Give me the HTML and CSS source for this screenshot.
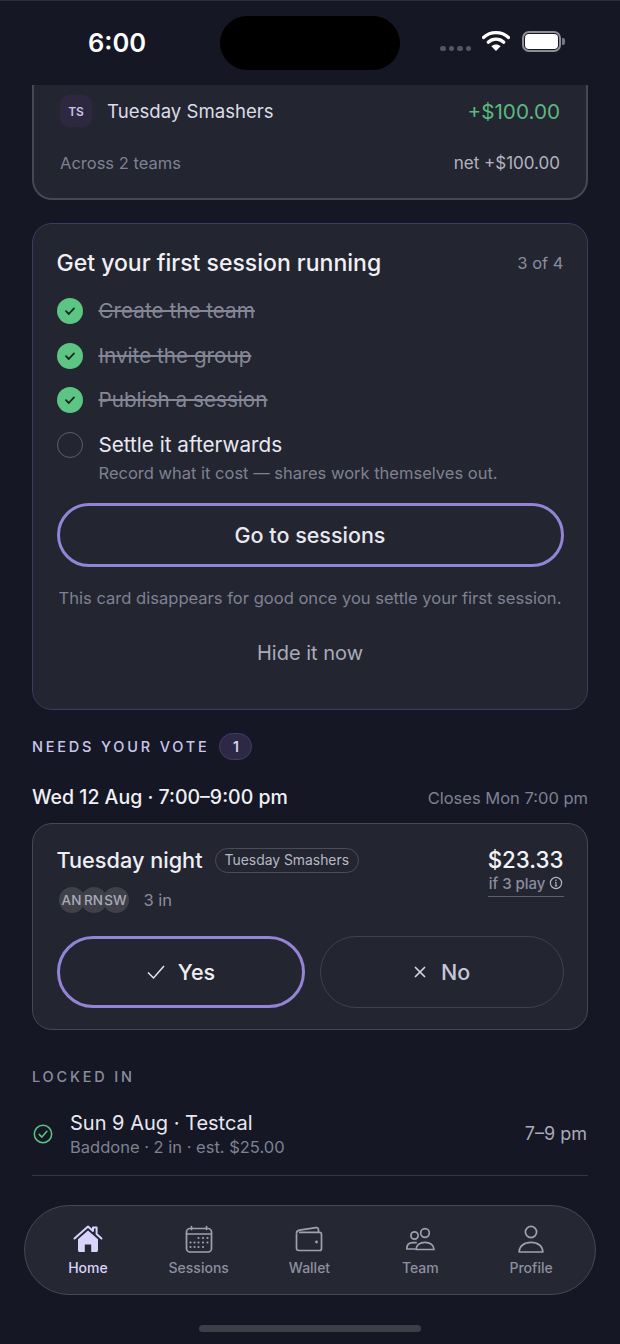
FILE: index.html
```html
<!DOCTYPE html>
<html lang="en">
<head>
  <meta charset="UTF-8">
  <meta name="viewport" content="width=device-width, initial-scale=1.0">
  <title>Home</title>
  <link rel="stylesheet" href="styles.css">
</head>
<body>
<div class="screen">
  <header class="status-bar">
    <span class="clock">6:00</span>
    <div class="island"></div>
    <div class="status-icons">
      <span class="signal"><i></i><i></i><i></i><i></i></span>
      <svg class="wifi" width="28" height="22" viewBox="0 0 28 22">
        <path d="M1.500 7.500C8.500 1 19.500 1 26.500 7.500" fill="none" stroke="#fff" stroke-width="3.200" stroke-linecap="round"/>
        <path d="M6.200 12.200C10.600 8.200 17.400 8.200 21.800 12.200" fill="none" stroke="#fff" stroke-width="3.200" stroke-linecap="round"/>
        <path d="M14 21L9.400 16.200C12 14 16 14 18.600 16.200Z" fill="#fff"/>
      </svg>
      <span class="battery"><span class="battery-fill"></span></span>
      <span class="battery-cap"></span>
    </div>
  </header>

  <section class="card wallet-card">
    <div class="wallet-row">
      <span class="team-badge">TS</span>
      <span class="team-name">Tuesday Smashers</span>
      <span class="amount">+$100.00</span>
    </div>
    <div class="wallet-foot">
      <span>Across 2 teams</span>
      <span class="net">net +$100.00</span>
    </div>
  </section>

  <section class="card setup-card">
    <div class="setup-head">
      <h2>Get your first session running</h2>
      <span class="setup-count">3 of 4</span>
    </div>
    <ul class="steps">
      <li class="step done">
        <svg class="tick" width="26" height="26" viewBox="0 0 26 26"><circle cx="13" cy="13" r="13" fill="#5cc583"/><path d="M9 13.200l2.800 2.800 5.200-5.600" fill="none" stroke="#15261d" stroke-width="1.800" stroke-linecap="round" stroke-linejoin="round"/></svg>
        <span>Create the team</span>
      </li>
      <li class="step done">
        <svg class="tick" width="26" height="26" viewBox="0 0 26 26"><circle cx="13" cy="13" r="13" fill="#5cc583"/><path d="M9 13.200l2.800 2.800 5.200-5.600" fill="none" stroke="#15261d" stroke-width="1.800" stroke-linecap="round" stroke-linejoin="round"/></svg>
        <span>Invite the group</span>
      </li>
      <li class="step done">
        <svg class="tick" width="26" height="26" viewBox="0 0 26 26"><circle cx="13" cy="13" r="13" fill="#5cc583"/><path d="M9 13.200l2.800 2.800 5.200-5.600" fill="none" stroke="#15261d" stroke-width="1.800" stroke-linecap="round" stroke-linejoin="round"/></svg>
        <span>Publish a session</span>
      </li>
      <li class="step todo">
        <span class="empty-dot"></span>
        <div>
          <div class="step-title">Settle it afterwards</div>
          <div class="step-sub">Record what it cost — shares work themselves out.</div>
        </div>
      </li>
    </ul>
    <button class="btn-outline">Go to sessions</button>
    <p class="setup-note">This card disappears for good once you settle your first session.</p>
    <button class="btn-plain">Hide it now</button>
  </section>

  <div class="section-head">
    <span class="eyebrow">NEEDS YOUR VOTE</span>
    <span class="count-pill">1</span>
  </div>

  <div class="vote-date">
    <span class="date">Wed 12 Aug · 7:00–9:00 pm</span>
    <span class="closes">Closes Mon 7:00 pm</span>
  </div>

  <section class="card vote-card">
    <div class="vote-top">
      <div class="vote-info">
        <div class="vote-title">
          <span class="session-name">Tuesday night</span>
          <span class="team-tag">Tuesday Smashers</span>
        </div>
        <div class="attendees">
          <span class="avatars">
            <span class="avatar">AN</span>
            <span class="avatar">RN</span>
            <span class="avatar">SW</span>
          </span>
          <span class="in-count">3 in</span>
        </div>
      </div>
      <div class="price">
        <div class="price-value">$23.33</div>
        <div class="price-note">if 3 play
          <svg width="14" height="14" viewBox="0 0 14 14"><circle cx="7" cy="7" r="5.600" fill="none" stroke="#b4b6c4" stroke-width="1.200"/><path d="M7 6.200v3.600M5.900 9.900h2.200M6 6.200h1" fill="none" stroke="#b4b6c4" stroke-width="1.100"/><circle cx="7" cy="4.200" r=".8" fill="#b4b6c4"/></svg>
        </div>
      </div>
    </div>
    <div class="vote-actions">
      <button class="vote-btn yes">
        <svg width="20" height="16" viewBox="0 0 20 16"><path d="M2 8.500l5.500 5.500L18 2" fill="none" stroke="#e6e6ee" stroke-width="1.500"/></svg>
        Yes
      </button>
      <button class="vote-btn no">
        <svg width="14" height="14" viewBox="0 0 14 14"><path d="M2 2l10 10M12 2L2 12" fill="none" stroke="#d5d6e2" stroke-width="1.700"/></svg>
        No
      </button>
    </div>
  </section>

  <div class="eyebrow locked-head">LOCKED IN</div>

  <div class="locked-row">
    <svg width="20" height="20" viewBox="0 0 20 20"><circle cx="10" cy="10" r="8.700" fill="none" stroke="#5cc583" stroke-width="1.500"/><path d="M6.200 10.400l2.700 2.700 5-5.800" fill="none" stroke="#5cc583" stroke-width="1.500" stroke-linecap="round" stroke-linejoin="round"/></svg>
    <div class="locked-text">
      <div class="locked-title">Sun 9 Aug · Testcal</div>
      <div class="locked-sub">Baddone · 2 in · est. $25.00</div>
    </div>
    <span class="locked-time">7–9 pm</span>
  </div>

  <nav class="tab-bar">
    <a class="tab active">
      <svg width="30" height="30" viewBox="0 0 30 30"><path d="M1.500 14.500L15 2.500l5 4.400V3.500h3.600v6.600l4.900 4.400" fill="none" stroke="#d9d4fb" stroke-width="2" stroke-linecap="round" stroke-linejoin="round"/><path d="M5 15.200L15 6.400l10 8.800v11c0 1-.7 1.800-1.800 1.800h-5v-7.500h-6.400V28h-5C5.700 28 5 27.200 5 26.200z" fill="#d9d4fb"/></svg>
      Home
    </a>
    <a class="tab">
      <svg width="30" height="30" viewBox="0 0 30 30" fill="none" stroke="#9fa1b1" stroke-width="1.700"><rect x="2.500" y="4.500" width="25" height="23.500" rx="3.500"/><path d="M2.500 10h25M7.500 2.500v3M22.500 2.500v3" stroke-linecap="round"/><g fill="#9fa1b1" stroke="none"><circle cx="14.500" cy="14" r="1.100"/><circle cx="19" cy="14" r="1.100"/><circle cx="23.500" cy="14" r="1.100"/><circle cx="6.500" cy="18.500" r="1.100"/><circle cx="10.500" cy="18.500" r="1.100"/><circle cx="14.500" cy="18.500" r="1.100"/><circle cx="19" cy="18.500" r="1.100"/><circle cx="23.500" cy="18.500" r="1.100"/><circle cx="6.500" cy="23" r="1.100"/><circle cx="10.500" cy="23" r="1.100"/><circle cx="14.500" cy="23" r="1.100"/><circle cx="19" cy="23" r="1.100"/></g></svg>
      Sessions
    </a>
    <a class="tab">
      <svg width="30" height="30" viewBox="0 0 30 30" fill="none" stroke="#9fa1b1" stroke-width="1.700" stroke-linejoin="round"><path d="M2.500 9.500c0-2 1.200-3 3-3.300L22 3.700c1.500-.2 2.500.6 2.500 2.300v2"/><path d="M2.500 9.500v14.800c0 1.300 1 2.200 2.200 2.200h21c1.200 0 1.800-.8 1.800-2V10.500c0-1.300-.8-2.200-2-2.200H5"/><circle cx="22.500" cy="18" r="1.400" fill="#9fa1b1" stroke="none"/></svg>
      Wallet
    </a>
    <a class="tab">
      <svg width="30" height="30" viewBox="0 0 30 30" fill="none" stroke="#9fa1b1" stroke-width="1.700" stroke-linejoin="round"><circle cx="9.500" cy="11.500" r="3.600"/><circle cx="20" cy="9" r="4.300"/><path d="M10.500 25H1.800c0-3.900 2.300-6.300 6-6.300h4"/><path d="M11 25.500c0-4.200 3.700-7.200 9-7.200s9 3 9 7.200z"/></svg>
      Team
    </a>
    <a class="tab">
      <svg width="30" height="30" viewBox="0 0 30 30" fill="none" stroke="#9fa1b1" stroke-width="1.700" stroke-linejoin="round"><circle cx="15" cy="8" r="5.600"/><path d="M3.200 28c0-5.800 5-9.700 11.800-9.700s11.800 3.900 11.800 9.700z"/></svg>
      Profile
    </a>
  </nav>
  <div class="home-indicator"></div>
</div>
</body>
</html>
```

FILE: styles.css
```css
* {
  box-sizing: border-box;
}
body {
  margin: 0;
  background-color: #151724;
  font-family: Inter, "Liberation Sans", sans-serif;
  color: #e8e8f0;
}
.screen {
  position: relative;
  width: 620px;
  height: 1344px;
  overflow: hidden;
  padding: 0 32px;
  background-color: #151724;
  box-shadow: inset 0 1px 0 #2b2d3a;
}
button {
  font-family: inherit;
  background: none;
  cursor: pointer;
}
.status-bar {
  position: relative;
  height: 85px;
  margin: 0 -32px;
  padding-left: 88px;
  display: flex;
  align-items: center;
}
.clock {
  font-size: 25.500px;
  font-weight: 600;
  color: #fff;
}
.island {
  position: absolute;
  left: 220px;
  top: 16px;
  width: 180px;
  height: 54px;
  border-radius: 27px;
  background: #000;
}
.status-icons {
  position: absolute;
  left: 440px;
  top: 30px;
  display: flex;
  align-items: center;
}
.signal {
  display: flex;
  gap: 3px;
  margin: 15px 11px 0 0;
}
.signal i {
  width: 5.500px;
  height: 5.500px;
  border-radius: 50%;
  background: #55565f;
}
.wifi {
  margin-right: 12px;
}
.battery {
  width: 39px;
  height: 21px;
  border: 2px solid #8e8f96;
  border-radius: 7px;
  padding: 1px;
}
.battery-fill {
  display: block;
  height: 100%;
  border-radius: 4px;
  background: #fff;
}
.battery-cap {
  width: 3px;
  height: 7px;
  margin-left: 1px;
  border-radius: 0 2px 2px 0;
  background: #77787f;
}
.card {
  background: #232531;
  border: 1.500px solid #464854;
  border-radius: 20px;
}
.wallet-card {
  height: 115px;
  border-top: none;
  border-width: 2px;
  border-radius: 0 0 20px 20px;
  padding: 10px 26px 0;
}
.wallet-row {
  display: flex;
  align-items: center;
  height: 32px;
}
.team-badge {
  width: 32px;
  height: 32px;
  border-radius: 9px;
  background: #2d2840;
  color: #c9c3ec;
  font-size: 12px;
  font-weight: 600;
  display: flex;
  align-items: center;
  justify-content: center;
}
.team-name {
  margin-left: 15px;
  font-size: 18.600px;
  color: #dcdce6;
}
.amount {
  margin-left: auto;
  font-size: 20.700px;
  color: #5cb87f;
}
.wallet-foot {
  display: flex;
  justify-content: space-between;
  margin-top: 26px;
  font-size: 16.500px;
  color: #7f8192;
}
.wallet-foot .net {
  font-size: 17px;
  color: #b2b3c0;
}
.setup-card {
  height: 487px;
  margin-top: 23px;
  padding: 24px 23.500px;
  border-color: #3e3a63;
}
.setup-head {
  display: flex;
  justify-content: space-between;
  align-items: center;
  height: 30px;
}
.setup-head h2 {
  margin: 0;
  font-size: 23px;
  font-weight: 500;
  color: #f0f0f5;
}
.setup-count {
  font-size: 16.500px;
  color: #8b8d9d;
}
.steps {
  list-style: none;
  margin: 20px 0 0;
  padding: 0;
}
.step {
  display: flex;
  align-items: flex-start;
  gap: 16px;
  min-height: 26px;
  margin-bottom: 18.700px;
  font-size: 20.700px;
}
.step.done span {
  line-height: 26px;
  color: #858797;
  text-decoration: line-through;
}
.tick {
  flex: none;
}
.empty-dot {
  flex: none;
  width: 26px;
  height: 26px;
  border: 1.500px solid #5c5e6b;
  border-radius: 50%;
}
.step-title {
  line-height: 26px;
  color: #e8e8f0;
}
.step-sub {
  margin-top: 4px;
  font-size: 16.500px;
  line-height: 22px;
  color: #7f8192;
}
.btn-outline {
  display: block;
  width: 100%;
  height: 64px;
  margin-top: 1px;
  border: 3px solid #9484d6;
  border-radius: 32px;
  font-size: 21.500px;
  font-weight: 500;
  color: #e8e8f0;
}
.setup-note {
  margin: 20px 0 0;
  font-size: 16.560px;
  line-height: 22px;
  text-align: center;
  white-space: nowrap;
  color: #7f8192;
}
.btn-plain {
  display: block;
  width: 100%;
  margin-top: 31px;
  border: none;
  font-size: 20px;
  font-weight: 400;
  color: #a9abb9;
}
.section-head {
  display: flex;
  align-items: center;
  gap: 10px;
  margin-top: 22px;
  height: 28px;
}
.eyebrow {
  font-size: 14.500px;
  font-weight: 500;
  letter-spacing: 2.800px;
  color: #c9c8ea;
}
.count-pill {
  width: 33px;
  height: 27px;
  border: 1.500px solid #443d68;
  border-radius: 14px;
  background: #2d2845;
  display: flex;
  align-items: center;
  justify-content: center;
  font-size: 14px;
  font-weight: 600;
  color: #d5d1f2;
}
.vote-date {
  display: flex;
  justify-content: space-between;
  align-items: baseline;
  margin-top: 24px;
  line-height: 26px;
}
.date {
  font-size: 19.500px;
  font-weight: 500;
  color: #f0f0f5;
}
.closes {
  font-size: 16.500px;
  color: #7f8192;
}
.vote-card {
  height: 207px;
  margin-top: 12px;
  padding: 21px 23.500px;
}
.vote-top {
  display: flex;
  justify-content: space-between;
  height: 91px;
}
.vote-title {
  display: flex;
  align-items: center;
  gap: 12px;
  height: 30px;
}
.session-name {
  font-size: 21.700px;
  font-weight: 500;
  color: #eeeef4;
}
.team-tag {
  height: 25px;
  padding: 0 9px;
  border: 1.500px solid #4a4c59;
  border-radius: 13px;
  font-size: 13.900px;
  line-height: 22px;
  color: #b6b7c5;
}
.attendees {
  display: flex;
  align-items: center;
  margin-top: 12px;
}
.avatars {
  display: flex;
  padding-left: 2px;
}
.avatar {
  width: 26px;
  height: 26px;
  margin-right: -4px;
  overflow: hidden;
  border-radius: 50%;
  background: #3f4049;
  font-size: 13.500px;
  font-weight: 500;
  line-height: 26px;
  text-align: center;
  white-space: nowrap;
  color: #a9abb7;
}
.in-count {
  margin-left: 19px;
  font-size: 16.500px;
  color: #8b8d9d;
}
.price {
  text-align: right;
}
.price-value {
  font-size: 22.300px;
  font-weight: 500;
  line-height: 30px;
  color: #f4f4f8;
}
.price-note {
  display: flex;
  align-items: center;
  justify-content: flex-end;
  gap: 3px;
  height: 22px;
  padding: 0 1px 5px 0;
  border-bottom: 1.500px solid #5d5f6e;
  font-size: 15px;
  font-weight: 500;
  color: #8b8d9d;
}
.vote-actions {
  display: flex;
  gap: 15px;
}
.vote-btn {
  flex: 1;
  height: 72px;
  display: flex;
  align-items: center;
  justify-content: center;
  gap: 12px;
  border-radius: 36px;
  font-size: 21.500px;
  font-weight: 500;
}
.vote-btn.yes {
  border: 3px solid #9484d6;
  color: #eeeef4;
}
.vote-btn.no {
  gap: 14px;
  padding-left: 6px;
  border: 1.500px solid #3f414d;
  color: #c6c7d6;
}
.locked-head {
  margin-top: 37px;
  color: #8b8d9d;
  line-height: 20px;
}
.locked-row {
  display: flex;
  align-items: center;
  gap: 17px;
  height: 89px;
  padding: 5px 1px 0 1px;
  border-bottom: 1.500px solid #343642;
}
.locked-title {
  font-size: 20px;
  line-height: 26px;
  color: #e8e8f0;
}
.locked-sub {
  font-size: 16.500px;
  line-height: 22px;
  color: #7f8192;
}
.locked-time {
  margin-left: auto;
  font-size: 18px;
  color: #a9abb9;
}
.tab-bar {
  position: absolute;
  left: 24px;
  top: 1205px;
  width: 572px;
  height: 89.500px;
  padding: 0 8.500px 0 7.500px;
  display: grid;
  grid-template-columns: repeat(5, 1fr);
  background: #252733;
  border: 1.500px solid #464854;
  border-radius: 45px;
}
.tab {
  display: flex;
  flex-direction: column;
  align-items: center;
  padding-top: 18px;
  gap: 5px;
  font-size: 14px;
  font-weight: 500;
  color: #8d8f9f;
}
.tab.active {
  color: #d9d4fb;
}
.home-indicator {
  position: absolute;
  left: 199px;
  top: 1325px;
  width: 222px;
  height: 7px;
  border-radius: 4px;
  background: #3d3e47;
}
```
